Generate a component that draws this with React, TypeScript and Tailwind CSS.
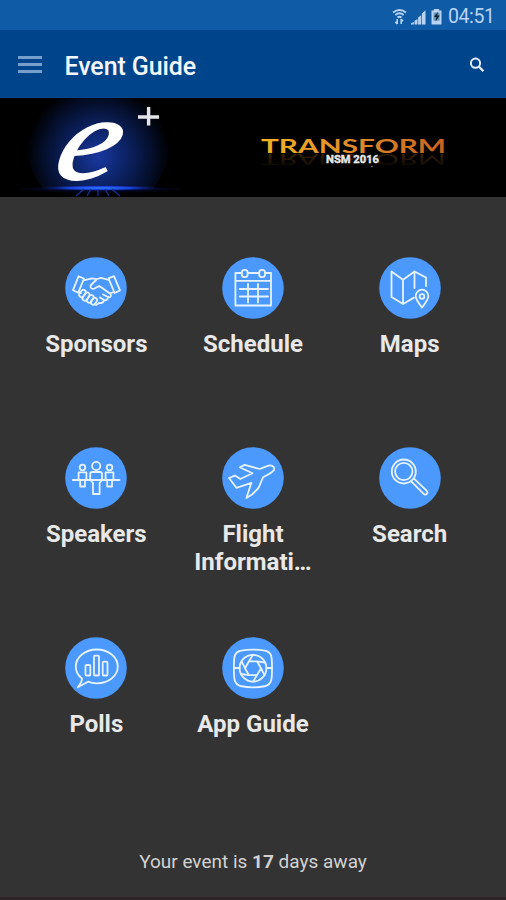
import type { ReactNode } from 'react';

const icons: Record<string, ReactNode> = {
  sponsors: (
    <>
      <path d="M13.5 19.3 19 21.5 13.2 35.8 8 33.2zM43.5 21.4 49 19.2 55 33.4 49.6 36z" />
      <path d="M18.6 23.4 27 21.3 31.5 22.2M43.8 23 36 20.9 32 22 25.5 28.5C25 31 27 32.6 29.5 31.5L34 29 36.5 30.5 45.5 37C47 39 45 41 43 40M43 40C43 42.5 41 44 39 43M39 43C38.5 45.5 36.5 46.5 34.5 45.8L31 48M38 37.5 43 40M35 40.5 39 43M49 35 44.8 36.3M13.8 34.6 16 36" />
      <rect x="15.2" y="32.5" width="4.6" height="8" rx="2.3" transform="rotate(35 17.5 36.5)" />
      <rect x="18.8" y="35" width="4.6" height="9" rx="2.3" transform="rotate(35 21 39.5)" />
      <rect x="22.8" y="37.5" width="4.6" height="8.5" rx="2.3" transform="rotate(35 25 42)" />
      <rect x="26.8" y="40.5" width="4.6" height="7.5" rx="2.3" transform="rotate(35 29 44)" />
    </>
  ),
  schedule: (
    <>
      <path d="M19.5 16H13.4V48.5H49V16H43M26 16H36.8M13.4 23.8H49M26 26.8V45.5M36 26.8V45.5M17.7 32H46M17.7 39.5H46" />
      <rect x="19.8" y="12.8" width="5.8" height="7.4" rx="2.6" />
      <rect x="37.2" y="12.8" width="5.8" height="7.4" rx="2.6" />
    </>
  ),
  maps: (
    <>
      <path d="M47 29V20.5L35.5 14.5 24 22.8 12.5 14.5V40L24 47 35 40.6M24 22.8V47M35.5 14.5V31" />
      <path d="M43 50.5C39 45.5 36.7 42 36.7 39a6.3 6.3 0 0 1 12.6 0C49.3 42 47 45.5 43 50.5Z" />
      <circle cx="43" cy="39.5" r="2.3" />
    </>
  ),
  speakers: (
    <>
      <circle cx="31.2" cy="19" r="4.1" />
      <circle cx="17.5" cy="20.5" r="2.8" />
      <circle cx="44.5" cy="20.5" r="2.8" />
      <path d="M25.2 33V27Q25.2 25 27.2 25H35Q37 25 37 27V33L34.6 36V47H28V36ZM7.8 33H54.5M13.6 33V25.4H21.4V33M15.2 33V39.5H20V33M40.6 33V25.4H48.4V33M42.2 33V39.5H47V33" />
    </>
  ),
  flight: (
    <path d="M7 31 13 28.6 18.3 32 30.5 26.2 17.7 20.2 22.7 17.9 37.7 22 45 19.1C49 17.5 52.5 19.2 52.2 22.2 52 24.2 49.5 25.5 47.5 26.7L41 30.3 36.5 41 30 47.5 24.4 51 29.4 35.8 14.4 40.8Z" />
  ),
  search: (
    <>
      <circle cx="24.8" cy="24.5" r="12" />
      <circle cx="24.8" cy="24.5" r="8.7" />
      <path d="M32.2 34.4 44.4 46.6C46.8 49 50 46 47.6 43.6L35 31.6" />
    </>
  ),
  polls: (
    <>
      <path d="M17 41.5C12.8 38.3 10.8 34 10.8 29.5 10.8 20 20 12.5 31.8 12.5S52.8 20 52.8 29.5 43.4 46.3 31.8 46.3C28.6 46.3 25.7 45.8 23 44.7L12.8 50.2C15 47.5 17 44.5 17 41.5Z" />
      <rect x="20.5" y="28" width="4.8" height="10.5" rx="1" />
      <rect x="29" y="18.7" width="5" height="19.8" rx="1" />
      <rect x="37.7" y="24.7" width="4.8" height="13.8" rx="1" />
    </>
  ),
  guide: (
    <>
      <path d="M11.9 29C11.9 18 13 15.5 18 13.8Q31 11.4 44 13.8C49 15.5 50 18 50 29M50 33C50 44 49 47 44 49Q31 51.6 18 49C13 47 11.9 44 11.9 33M11.9 29V33M50 29V33M11.9 31H17.6M44.4 31H50" />
      <circle cx="31" cy="31.2" r="13.4" />
      <path d="M27 24.3H35L39 31.2 35 38.1H27L23 31.2ZM27 24.3 31 17.8M35 24.3 43 25.5M39 31.2 42.5 38.3M35 38.1 31 44.6M27 38.1 19 37M23 31.2 19.5 24.2" />
    </>
  ),
};

const items = [
  { icon: 'sponsors', label: ['Sponsors'] },
  { icon: 'schedule', label: ['Schedule'] },
  { icon: 'maps', label: ['Maps'] },
  { icon: 'speakers', label: ['Speakers'] },
  { icon: 'flight', label: ['Flight', 'Informati…'] },
  { icon: 'search', label: ['Search'] },
  { icon: 'polls', label: ['Polls'] },
  { icon: 'guide', label: ['App Guide'] },
];

function StatusBar() {
  return (
    <div className="flex h-[30px] items-center justify-end bg-[#105ba6] pr-3 pt-[3px] text-[#b9d3f3]">
      <svg className="h-[18px] w-[52px]" viewBox="0 0 52 18" fill="none">
        <path d="M1 4.5Q7.5-.5 14 4.5M3.3 7Q7.5 3.7 11.7 7M5.5 9.5Q7.5 7.8 9.5 9.5" stroke="currentColor" strokeWidth="1.9" />
        <path d="M5.2 11v5M3.4 13.8l1.8 2.2M9.2 16v-5M11 13.2 9.2 11" stroke="currentColor" strokeWidth="1.6" />
        <path d="M19 16.4h2.8v-2.4L19 15.2zM22.5 16.4h3V11l-3 1.8zM26.1 16.4h3.1V7.2l-3.1 2.4zM29.9 16.4h3.6V2.2L29.9 5.6z" fill="currentColor" />
        <path d="M39.5 2.6h2.4V1h5.2v1.6h2.4v14h-10z" fill="currentColor" />
        <path d="M41.5 4.6h6v8h-6z" fill="#6292b5" />
        <path d="M46 3.8 42 9.1h2.4l-.9 4.5 4.2-6h-2.5z" fill="#08202f" />
      </svg>
      <span className="ml-1 w-[46px] text-[19.5px] leading-[26px] tracking-[-0.4px]">04:51</span>
    </div>
  );
}

function Banner() {
  return (
    <svg className="block h-[99px] w-full bg-black" viewBox="0 0 506 99">
      <defs>
        <radialGradient id="halo" cx="50%" cy="60%" r="50%">
          <stop offset="0" stopColor="#1838a0" />
          <stop offset=".4" stopColor="#0c2263" />
          <stop offset=".75" stopColor="#050f2c" />
          <stop offset="1" stopColor="#000" />
        </radialGradient>
        <radialGradient id="floor">
          <stop offset="0" stopColor="#347dff" />
          <stop offset=".5" stopColor="#173fd8" />
          <stop offset="1" stopColor="#02082e" stopOpacity="0" />
        </radialGradient>
        <radialGradient id="ground" cx="50%" cy="0%" r="60%">
          <stop offset="0" stopColor="#06104a" />
          <stop offset="1" stopColor="#000" />
        </radialGradient>
        <linearGradient id="gold">
          <stop offset="0" stopColor="#f4b324" />
          <stop offset=".5" stopColor="#de8b2b" />
          <stop offset="1" stopColor="#c9611f" />
        </linearGradient>
        <linearGradient id="fade" x1="0" x2="0" y1="1" y2="0">
          <stop offset="0" stopColor="#8b5514" stopOpacity=".5" />
          <stop offset="1" stopColor="#8b5514" stopOpacity="0" />
        </linearGradient>
      </defs>
      <ellipse cx="98" cy="44" rx="72" ry="72" fill="url(#halo)" />
      <path d="M20 90H180V99H20z" fill="url(#ground)" />
      <ellipse cx="100" cy="90" rx="66" ry="3.2" fill="url(#floor)" />
      <path d="M84 91 76 98M91 91 87 98M98 91V98M105 91l4 7M112 91l8 7" stroke="#12308c" strokeWidth="1.4" />
      <text x="0" y="0" transform="translate(50.5 80.5) skewX(-16) scale(1.24 1.06)" fill="#fff" stroke="#fff" strokeWidth="1.6" className="font-['Liberation_Serif'] text-[112px] leading-none italic">e</text>
      <path d="M138 19H159M148.6 9V27.5" stroke="#e5e5e9" strokeWidth="3.4" />
      <text x="261" y="0" transform="translate(0 56) scale(1 -.9)" textLength="185" lengthAdjust="spacingAndGlyphs" fill="url(#fade)" className="font-['Lato'] text-[18px]">TRANSFORM</text>
      <text x="261" y="55" textLength="185" lengthAdjust="spacingAndGlyphs" fill="url(#gold)" className="font-['Lato'] text-[18.5px] font-bold">TRANSFORM</text>
      <text x="326" y="65" textLength="53" lengthAdjust="spacingAndGlyphs" fill="#e8e8e8" stroke="#e8e8e8" strokeWidth=".4" className="font-['Roboto'] text-[10.5px] font-bold">NSM 2016</text>
      <circle cx="372" cy="68.5" r=".7" fill="#aaa" />
    </svg>
  );
}

export default function App() {
  return (
    <div className="flex h-[900px] w-[506px] flex-col overflow-hidden bg-[#333333] font-['Roboto',sans-serif]">
      <StatusBar />
      <header className="flex h-[68px] items-center bg-[#00458b] pl-[18px] pr-[21px]">
        <div className="flex w-6 flex-col gap-1">
          <i className="h-[3px] bg-[#779fce]" />
          <i className="h-[3px] bg-[#779fce]" />
          <i className="h-[3px] bg-[#779fce]" />
        </div>
        <h1 className="ml-[22.5px] mt-[5px] flex-1 text-[25px] font-medium leading-8 tracking-[-0.1px] text-[#f4f7ff]">Event Guide</h1>
        <svg className="mt-px h-4 w-4" viewBox="0 0 16 16" fill="none" stroke="#e6edff" strokeWidth="2">
          <circle cx="6.5" cy="6.2" r="4.6" />
          <path d="m9.8 9.5 4.6 4.6" strokeWidth="2.3" />
        </svg>
      </header>
      <Banner />
      <main className="grid auto-rows-[190px] grid-cols-3 px-[18px] pt-[60px]">
        {items.map((item) => (
          <div key={item.icon} className="flex flex-col items-center">
            <svg className="h-[62px] w-[62px] shrink-0" viewBox="0 0 62 62" fill="none" stroke="#e6f3ff" strokeWidth="1.8" strokeLinejoin="round" strokeLinecap="round">
              <circle cx="31" cy="31" r="30.8" fill="#4b99fc" stroke="none" />
              {icons[item.icon]}
            </svg>
            <div className="mt-[11px] text-center text-[24px] font-bold leading-7 text-[#e8e8e8]">
              {item.label.map((line) => (
                <div key={line}>{line}</div>
              ))}
            </div>
          </div>
        ))}
      </main>
      <p className="mt-auto mb-[21px] text-center text-[19px] leading-7 text-[#d2d2d2]">
        Your event is <b>17</b> days away
      </p>
      <div className="h-[3px] shrink-0 bg-[#2c2427]" />
    </div>
  );
}
